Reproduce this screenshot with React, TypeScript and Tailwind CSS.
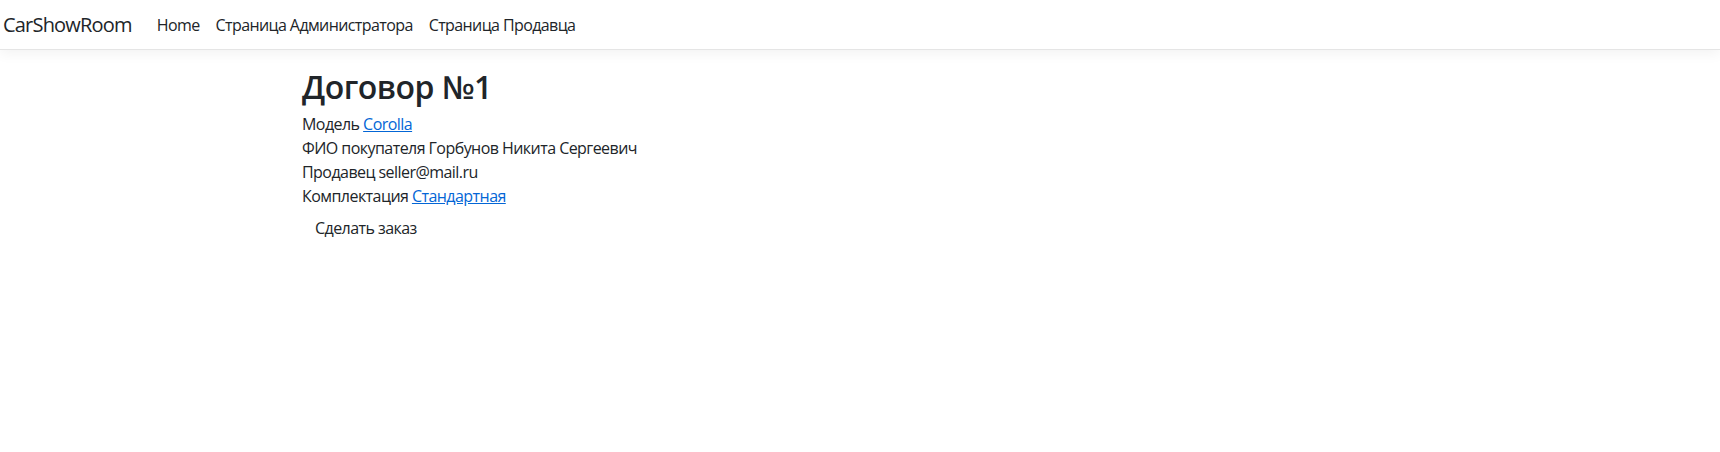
export default function App() {
  return (
    <div className="min-h-[452px] bg-white text-[#212529] font-['Open_Sans',sans-serif]">
      <nav className="h-[50px] bg-white border-b border-[#e5e5e5] shadow-[0_4px_12px_rgba(0,0,0,0.05)] flex items-center">
        <a className="pl-[3px] pr-[25px] text-[20px] leading-[30px] text-[#212529] tracking-[-0.8px]">CarShowRoom</a>
        <ul className="flex items-center text-[16px] leading-[24px] tracking-[-0.6px]">
          <li className="pr-[16px]">Home</li>
          <li className="pr-[16px]">Страница Администратора</li>
          <li>Страница Продавца</li>
        </ul>
      </nav>
      <main className="w-[1140px] mx-auto px-[12px] pt-[18px]">
        <h1 className="text-[32px] leading-[38px] font-semibold mb-[6px] tracking-[-0.5px]">Договор №1</h1>
        <div className="text-[16px] leading-[24px] tracking-[-0.55px]">
          <div>Модель <a href="#" className="text-[#0366d6] underline">Corolla</a></div>
          <div>ФИО покупателя Горбунов Никита Сергеевич</div>
          <div>Продавец seller@mail.ru</div>
          <div>Комплектация <a href="#" className="text-[#0366d6] underline">Стандартная</a></div>
        </div>
        <button className="mt-[2px] px-[13px] py-[6px] text-[16px] leading-[24px] tracking-[-0.55px] text-[#212529]">Сделать заказ</button>
      </main>
    </div>
  );
}
